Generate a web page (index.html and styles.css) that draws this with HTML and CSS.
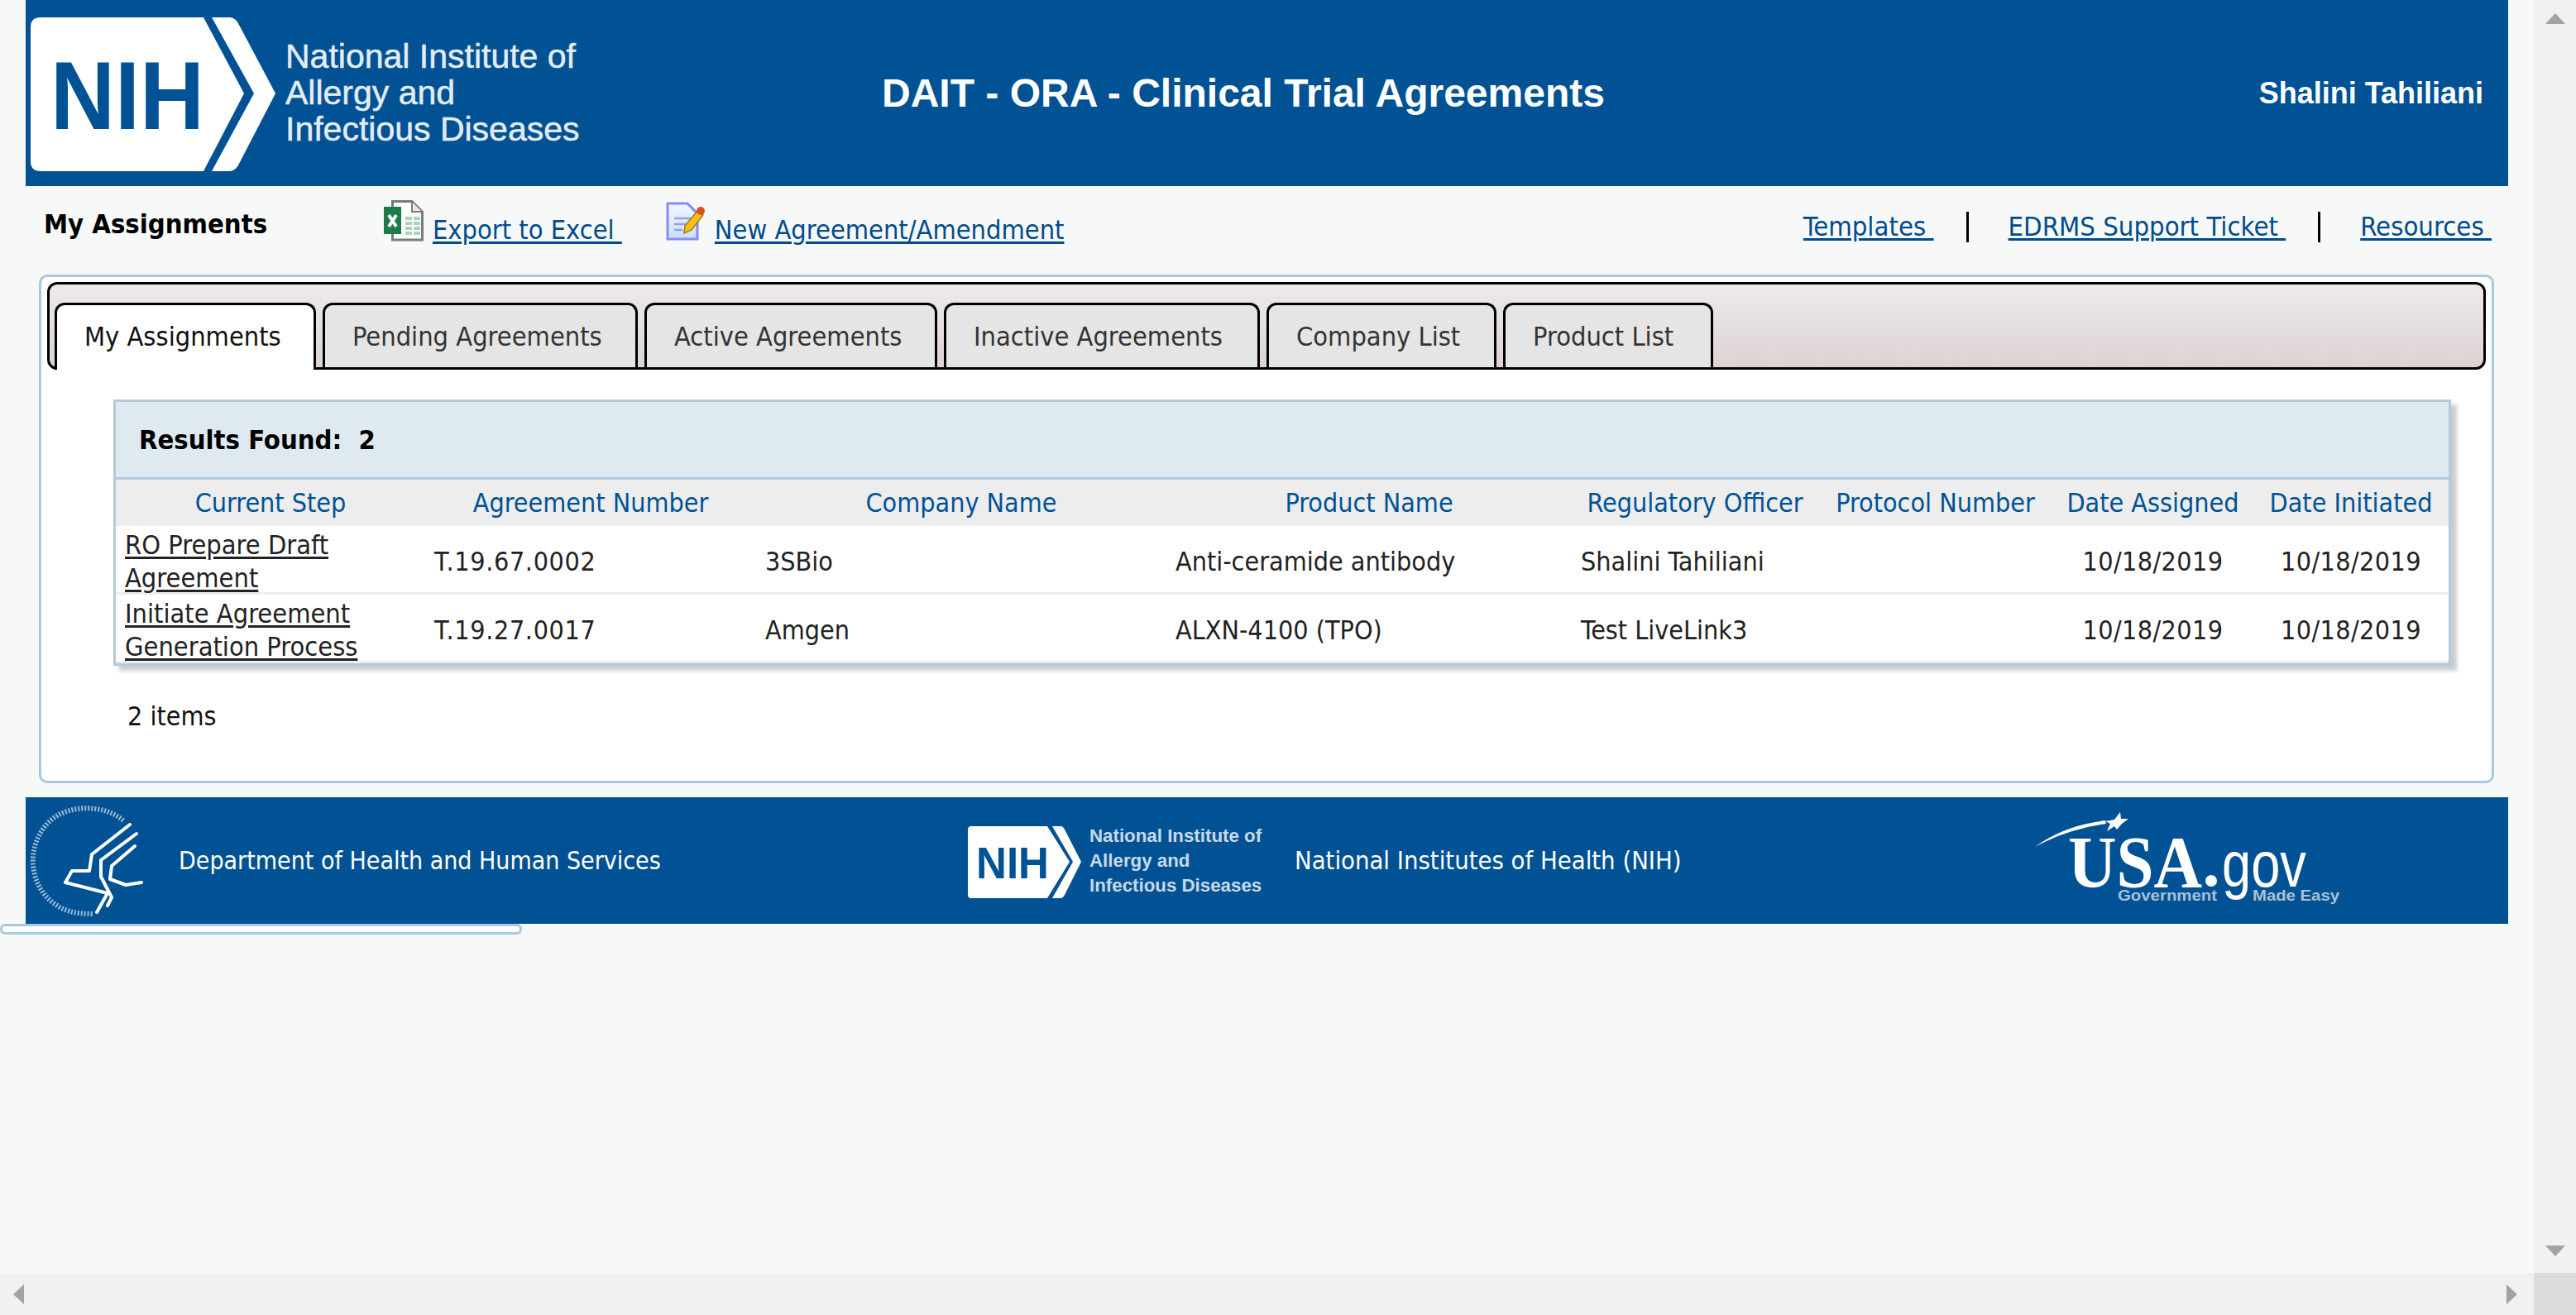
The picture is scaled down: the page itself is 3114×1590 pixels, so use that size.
FILE: index.html
```html
<!DOCTYPE html>
<html lang="en">
<head>
    <meta charset="UTF-8">
    <meta name="viewport" content="width=device-width, initial-scale=1.0">
    <title>DAIT - ORA - Clinical Trial Agreements</title>
    <link rel="stylesheet" href="styles.css">
</head>
<body>
    <div class="page">
        <header class="banner">
            <svg class="nih-logo" width="340" height="225" viewBox="0 0 340 225">
                <path fill="#fff" d="M18 21H215L264 113L215 207H18Q6 207 6 195V33Q6 21 18 21Z"/>
                <path fill="#fff" d="M225 21H247Q254 21 259 32L302 113L259 196Q254 207 247 207H225L276 113Z"/>
                <text class="nih-letters" x="30" y="156" textLength="186" lengthAdjust="spacingAndGlyphs">NIH</text>
            </svg>
            <div class="banner-institute">
                <span>National Institute of</span>
                <span>Allergy and</span>
                <span>Infectious Diseases</span>
            </div>
            <h1 class="banner-title">DAIT - ORA - Clinical Trial Agreements</h1>
            <div class="banner-user">Shalini Tahiliani</div>
        </header>

        <div class="toolbar">
            <div class="toolbar-title">My Assignments</div>
            <a class="tool-link excel-link" href="#">
                <svg width="48" height="50" viewBox="0 0 48 50">
                    <path fill="#fff" stroke="#7b7b7b" stroke-width="3" d="M10.5 1.5H34L46.5 14V48H10.5Z"/>
                    <path fill="#e8e8e8" stroke="#7b7b7b" stroke-width="2" d="M34 2V14H46"/>
                    <path fill="none" stroke="#a9d6bb" stroke-width="4" stroke-dasharray="8 2" d="M26 22H44M26 28H44M26 34H44M26 40H44"/>
                    <rect x="0" y="8" width="21" height="33" fill="#1f7a4a"/>
                    <path fill="none" stroke="#fff" stroke-width="4" d="M6 18L15 32M15 18L6 32"/>
                </svg>
                <span>Export to Excel&nbsp;</span>
            </a>
            <a class="tool-link new-link" href="#">
                <svg width="48" height="48" viewBox="0 0 48 48">
                    <defs>
                        <linearGradient id="sheet" x1="0" y1="0" x2="0" y2="1">
                            <stop offset="0" stop-color="#f2f5ff"/>
                            <stop offset="1" stop-color="#c6e2ff"/>
                        </linearGradient>
                    </defs>
                    <path fill="url(#sheet)" stroke="#8a8af5" stroke-width="3" d="M2 2H26L38 14V45H2Z"/>
                    <path fill="none" stroke="#9b9bf0" stroke-width="2.5" d="M10 20H30M10 27H24M10 34H20"/>
                    <path fill="#f2c21b" stroke="#a8741a" stroke-width="1.5" d="M23 29L38 11L45 16L31 34L22 38Z"/>
                    <circle cx="42" cy="11" r="5" fill="#d6531d"/>
                </svg>
                <span>New Agreement/Amendment</span>
            </a>
            <nav class="toolbar-nav">
                <a href="#">Templates&nbsp;</a>
                <i class="nav-bar"></i>
                <a href="#">EDRMS Support Ticket&nbsp;</a>
                <i class="nav-bar"></i>
                <a href="#">Resources&nbsp;</a>
            </nav>
        </div>

        <main class="panel">
            <ul class="tabs">
                <li class="tab active">My Assignments</li>
                <li class="tab">Pending Agreements</li>
                <li class="tab">Active Agreements</li>
                <li class="tab">Inactive Agreements</li>
                <li class="tab">Company List</li>
                <li class="tab">Product List</li>
            </ul>

            <section class="grid">
                <div class="grid-results">Results Found:&nbsp; 2</div>
                <table class="grid-table">
                    <colgroup>
                        <col class="col-step">
                        <col class="col-number">
                        <col class="col-company">
                        <col class="col-product">
                        <col class="col-officer">
                        <col class="col-protocol">
                        <col class="col-assigned">
                        <col class="col-initiated">
                    </colgroup>
                    <thead>
                        <tr>
                            <th>Current Step</th>
                            <th>Agreement Number</th>
                            <th>Company Name</th>
                            <th>Product Name</th>
                            <th>Regulatory Officer</th>
                            <th>Protocol Number</th>
                            <th>Date Assigned</th>
                            <th>Date Initiated</th>
                        </tr>
                    </thead>
                    <tbody>
                        <tr>
                            <td><a href="#">RO Prepare Draft Agreement</a></td>
                            <td class="number">T.19.67.0002</td>
                            <td>3SBio</td>
                            <td>Anti-ceramide antibody</td>
                            <td>Shalini Tahiliani</td>
                            <td></td>
                            <td class="date">10/18/2019</td>
                            <td class="date">10/18/2019</td>
                        </tr>
                        <tr>
                            <td><a href="#">Initiate Agreement Generation Process</a></td>
                            <td class="number">T.19.27.0017</td>
                            <td>Amgen</td>
                            <td>ALXN-4100 (TPO)</td>
                            <td>Test LiveLink3</td>
                            <td></td>
                            <td class="date">10/18/2019</td>
                            <td class="date">10/18/2019</td>
                        </tr>
                    </tbody>
                </table>
            </section>
            <div class="grid-count">2 items</div>
        </main>

        <footer class="footer">
            <div class="footer-hhs">
                <svg width="150" height="153" viewBox="0 0 150 153">
                    <path fill="none" stroke="#9fbbd4" stroke-width="6" stroke-dasharray="2 2" d="M118 28C95 8 50 8 28 30C2 56 2 100 30 125C45 138 60 141 82 141"/>
                    <g fill="none" stroke="#fff" stroke-width="4" stroke-linejoin="round" stroke-linecap="round">
                        <path d="M126 33L80 69L77 89L56 89L48 103L99 116L86 139"/>
                        <path d="M134 44L91 76L91 96L104 121L99 131"/>
                        <path d="M132 59L104 83L102 99L121 106L140 103"/>
                    </g>
                </svg>
                <span>Department of Health and Human Services</span>
            </div>
            <div class="footer-nih">
                <svg class="footer-nih-logo" width="180" height="87" viewBox="0 0 180 87">
                    <path fill="#fff" d="M4 0H96L123 43L96 87H4Q0 87 0 83V4Q0 0 4 0Z"/>
                    <path fill="#fff" d="M102 0H112Q115 0 117 4L137 43L117 83Q115 87 112 87H102L127 43Z"/>
                    <text class="nih-letters nih-letters-small" x="10" y="63" textLength="88" lengthAdjust="spacingAndGlyphs">NIH</text>
                </svg>
                <div class="footer-institute">
                    <span>National Institute of</span>
                    <span>Allergy and</span>
                    <span>Infectious Diseases</span>
                </div>
                <span class="footer-nih-name">National Institutes of Health (NIH)</span>
            </div>
            <svg class="usa-logo" width="400" height="153" viewBox="2450 964 400 153">
                <path fill="#fff" d="M2460 1024Q2495 998 2545 992L2546 996Q2498 1003 2460 1024Z"/>
                <polygon fill="#fff" points="2563,982 2564,990 2573,990 2565,996 2559,1003 2556,999 2547,1005 2551,996 2545,993 2556,991"/>
                <text class="usa-word" x="2500" y="1072" textLength="162" lengthAdjust="spacingAndGlyphs">USA</text>
                <circle cx="2673" cy="1065" r="7" fill="#fff"/>
                <text class="usa-gov" x="2686" y="1072" textLength="102" lengthAdjust="spacingAndGlyphs">gov</text>
                <text class="usa-tag" x="2560" y="1089" textLength="120" lengthAdjust="spacingAndGlyphs">Government</text>
                <text class="usa-tag" x="2723" y="1089" textLength="105" lengthAdjust="spacingAndGlyphs">Made Easy</text>
            </svg>
        </footer>
        <div class="stray-box"></div>
    </div>

    <div class="scroll-v">
        <i class="arrow arrow-up"></i>
        <i class="arrow arrow-down"></i>
    </div>
    <div class="scroll-h">
        <i class="arrow arrow-left"></i>
        <i class="arrow arrow-right"></i>
    </div>
    <div class="scroll-corner"></div>
</body>
</html>
```

FILE: styles.css
```css
body {
    font-family: "DejaVu Sans Condensed", "DejaVu Sans", sans-serif;
    margin: 0;
    padding: 0;
    height: 100vh;
    overflow: hidden;
    display: grid;
    grid-template-columns: 1fr 51px;
    grid-template-rows: 1fr 51px;
    background-color: #f7f9f9;
    font-size: 32px;
    color: #222;
}
.page {
    overflow: hidden;
    padding-left: 31px;
    padding-right: 31px;
}

/* top banner */
.banner {
    height: 225px;
    background-color: #005295;
    color: white;
    display: flex;
    align-items: center;
}
.nih-logo {
    flex: none;
}
.nih-letters {
    font-family: "Liberation Sans", sans-serif;
    font-size: 116px;
    font-weight: bold;
    fill: #005295;
}
.nih-letters-small {
    font-size: 54px;
}
.banner-institute {
    display: flex;
    flex-direction: column;
    width: 365px;
    flex: none;
    margin-left: -26px;
    margin-top: -1px;
    font-family: "Liberation Sans", sans-serif;
    font-size: 41px;
    line-height: 44px;
    color: #e4ecf3;
    -webkit-text-stroke: 0.5px #e4ecf3;
    white-space: nowrap;
}
.banner-title {
    margin: 0 0 0 356px;
    font-family: "Liberation Sans", sans-serif;
    font-size: 48px;
    font-weight: bold;
}
.banner-user {
    margin-left: auto;
    margin-right: 30px;
    font-family: "Liberation Sans", sans-serif;
    font-size: 36px;
    font-weight: bold;
}

/* toolbar under the banner */
.toolbar {
    height: 107px;
    display: flex;
    align-items: flex-start;
}
.toolbar-title {
    font-size: 32.5px;
    font-weight: bold;
    color: black;
    width: 411px;
    margin-top: 27px;
    margin-left: 22px;
}
.tool-link {
    display: flex;
    align-items: flex-start;
    gap: 11px;
    margin-top: 17px;
    color: #004b8d;
    text-decoration: none;
}
.tool-link span {
    margin-top: 17px;
}
.new-link {
    margin-left: 53px;
}
.new-link svg {
    margin-top: 2px;
}
.toolbar-nav {
    margin-left: auto;
    margin-top: 30px;
    margin-right: 20px;
    display: flex;
    align-items: center;
    gap: 38px;
}
.tool-link span,
.toolbar-nav a {
    font-size: 32.3px;
    color: #004b8d;
    text-decoration: underline;
    text-decoration-thickness: 3px;
    text-underline-offset: 3px;
    line-height: 38px;
}
.toolbar-nav a {
    font-size: 32.6px;
}
.nav-bar {
    width: 3px;
    height: 37px;
    margin: 0 10px 0 1px;
    background: black;
}

/* tab panel */
.panel {
    height: 615px;
    box-sizing: border-box;
    margin-left: 16px;
    margin-right: 17px;
    border: 3px solid #a8c8e0;
    border-radius: 10px;
    background: white;
    padding: 6px 7px;
}
.tabs {
    list-style-type: none;
    margin: 0;
    height: 106px;
    box-sizing: border-box;
    padding: 22px 0 0 6px;
    display: grid;
    grid-template-columns: 316px 381px 354px 382px 278px 254px;
    gap: 8px;
    border: 3px solid black;
    border-radius: 12px;
    background: linear-gradient(#eeeaea, #ddd3d3);
}
.tab {
    box-sizing: border-box;
    height: 78px;
    padding-left: 33px;
    font-size: 32.3px;
    line-height: 77px;
    background-color: #e6e5e5;
    border: 3px solid black;
    border-bottom: none;
    border-radius: 12px 12px 0 0;
    color: #333;
}
.tab.active {
    background-color: white;
    color: #111;
    height: 81px;
}

/* results grid */
.grid {
    margin: 36px 0 0 80px;
    width: 2820px;
    border: 3px solid #b3c9dc;
    box-shadow: 7px 6px 5px #ccc;
    background: white;
}
.grid-results {
    height: 91px;
    line-height: 93px;
    padding-left: 28px;
    background-color: #dfe9f0;
    border-bottom: 3px solid #b3c9dc;
    font-size: 32.5px;
    font-weight: bold;
    color: black;
}
.grid-table {
    width: 100%;
    border-collapse: separate;
    border-spacing: 0;
    table-layout: fixed;
}
.col-step { width: 374px; }
.col-number { width: 400px; }
.col-company { width: 496px; }
.col-product { width: 490px; }
.col-officer { width: 298px; }
.col-protocol { width: 283px; }
.col-assigned { width: 243px; }
.grid-table th {
    height: 56px;
    padding: 0;
    font-weight: normal;
    color: #005295;
    background-color: #ededed;
}
.grid-table td {
    box-sizing: border-box;
    height: 83px;
    padding: 2px 0 0 11px;
    line-height: 40px;
    box-shadow: inset 0 -3px 0 #ededed; /* row separator, keeps rows at 83px */
    overflow: hidden;
}
.grid-table td a {
    font-size: 32.3px;
    color: #222;
    text-decoration: underline;
    text-decoration-thickness: 3px;
    text-underline-offset: 3px;
    display: block;
    width: 320px;
}
.grid-table td.number {
    letter-spacing: 0.65px;
}
.grid-table td.date {
    text-align: center;
    padding-left: 0;
    letter-spacing: 0.4px;
}
.grid-count {
    margin: 42px 0 0 97px;
    color: #111;
}

/* footer */
.footer {
    margin-top: 17px;
    height: 153px;
    background-color: #005295;
    color: white;
    display: flex;
    align-items: center;
}
.footer-hhs {
    width: 1139px;
    flex: none;
    display: flex;
    align-items: center;
    gap: 35px;
}
.footer-hhs span {
    font-size: 30px;
}
.footer-nih {
    width: 1280px;
    flex: none;
    display: flex;
    align-items: center;
}
.footer-nih-logo {
    flex: none;
    margin-top: 3px;
}
.footer-institute {
    display: flex;
    flex-direction: column;
    flex: none;
    width: 248px;
    margin-left: -33px;
    font-family: "Liberation Sans", sans-serif;
    font-size: 22.3px;
    line-height: 30px;
    font-weight: bold;
    color: #c9d9e7;
    white-space: nowrap;
}
.footer-nih-name {
    font-size: 30.7px;
}
.usa-logo {
    flex: none;
    display: block;
}
.usa-word {
    font-family: "Liberation Serif", serif;
    font-size: 89px;
    font-weight: bold;
    fill: white;
}
.usa-gov {
    font-family: "Liberation Sans", sans-serif;
    font-size: 77px;
    fill: white;
}
.usa-tag {
    font-family: "Liberation Sans", sans-serif;
    font-size: 19px;
    font-weight: bold;
    fill: #a9c1d6;
}
.stray-box {
    box-sizing: border-box;
    width: 631px;
    height: 13px;
    margin-left: -31px;
    background: white;
    border: 3px solid #a8c8e0;
    border-radius: 6px;
}

/* browser scrollbars */
.scroll-v,
.scroll-h {
    background-color: #f1f1f1;
    display: flex;
    justify-content: space-between;
    align-items: center;
}
.scroll-v {
    flex-direction: column;
    padding: 16px 0 20px;
}
.scroll-h {
    padding: 0 20px 0 16px;
}
.scroll-corner {
    background-color: #dcdcdc;
}
.arrow {
    width: 0;
    height: 0;
    border-style: solid;
    border-color: transparent;
}
.arrow-up {
    border-width: 0 12.5px 13px;
    border-bottom-color: #a3a3a3;
}
.arrow-down {
    border-width: 13px 12.5px 0;
    border-top-color: #a3a3a3;
}
.arrow-left {
    border-width: 12.5px 13px 12.5px 0;
    border-right-color: #a3a3a3;
}
.arrow-right {
    border-width: 12.5px 0 12.5px 13px;
    border-left-color: #a3a3a3;
}
```
